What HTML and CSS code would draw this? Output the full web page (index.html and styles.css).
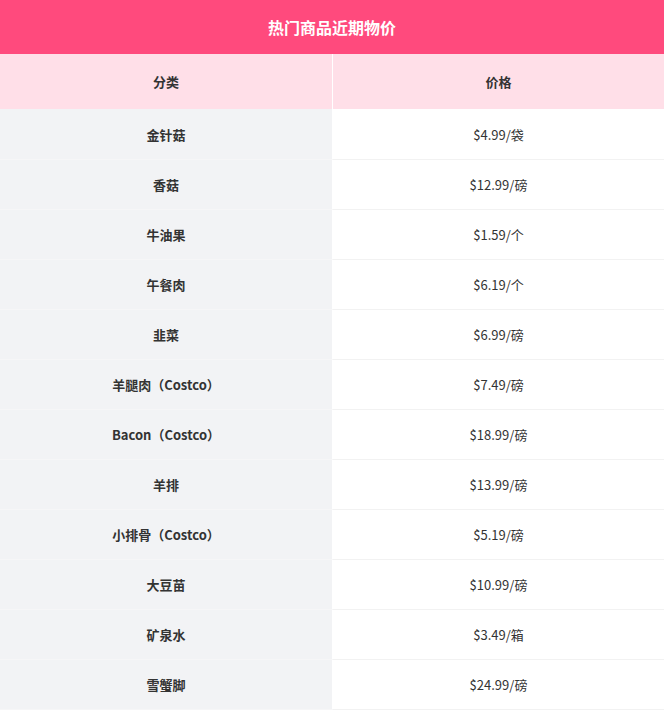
FILE: index.html
```html
<!DOCTYPE html>
<html>
<head>
<meta charset="utf-8">
<link rel="stylesheet" href="styles.css">
</head>
<body>
<div class="wrap">
  <div class="title">热门商品近期物价</div>
  <table class="tbl">
    <thead>
      <tr><th>分类</th><th>价格</th></tr>
    </thead>
    <tbody>
      <tr class="first"><td class="name">金针菇</td><td class="price">$4.99/袋</td></tr>
      <tr><td class="name">香菇</td><td class="price">$12.99/磅</td></tr>
      <tr><td class="name">牛油果</td><td class="price">$1.59/个</td></tr>
      <tr><td class="name">午餐肉</td><td class="price">$6.19/个</td></tr>
      <tr><td class="name">韭菜</td><td class="price">$6.99/磅</td></tr>
      <tr><td class="name">羊腿肉（Costco）</td><td class="price">$7.49/磅</td></tr>
      <tr><td class="name">Bacon（Costco）</td><td class="price">$18.99/磅</td></tr>
      <tr><td class="name">羊排</td><td class="price">$13.99/磅</td></tr>
      <tr><td class="name">小排骨（Costco）</td><td class="price">$5.19/磅</td></tr>
      <tr><td class="name">大豆苗</td><td class="price">$10.99/磅</td></tr>
      <tr><td class="name">矿泉水</td><td class="price">$3.49/箱</td></tr>
      <tr><td class="name">雪蟹脚</td><td class="price">$24.99/磅</td></tr>
    </tbody>
  </table>
</div>
</body>
</html>
```
FILE: styles.css
```css
html, body {
  margin: 0;
  padding: 0;
  background: #ffffff;
}
body {
  font-family: "Noto Sans CJK SC", "Noto Sans", sans-serif;
  color: #333333;
  font-size: 13px;
}
.wrap {
  width: 664px;
}
.title {
  height: 54px;
  line-height: 54px;
  background: #ff4a7d;
  color: #ffffff;
  font-size: 16px;
  font-weight: bold;
  text-align: center;
}
.tbl {
  width: 664px;
  border-collapse: collapse;
  table-layout: fixed;
}
.tbl th {
  height: 55px;
  padding: 0;
  background: #ffdfe8;
  font-weight: bold;
  font-size: 13px;
  color: #333333;
}
.tbl th:first-child {
  width: 332px;
  border-right: 1px solid #ffffff;
}
.tbl td {
  height: 49px;
  padding: 0;
  text-align: center;
  border-bottom: 1px solid #f2f2f2;
}
.tbl tr.first td {
  height: 50px;
}
.tbl td.name {
  background: #f2f3f5;
  font-weight: bold;
  border-bottom-color: #f6f6f7;
}
.tbl td.price {
  background: #ffffff;
  border-left: 1px solid #ffffff;
}
```
